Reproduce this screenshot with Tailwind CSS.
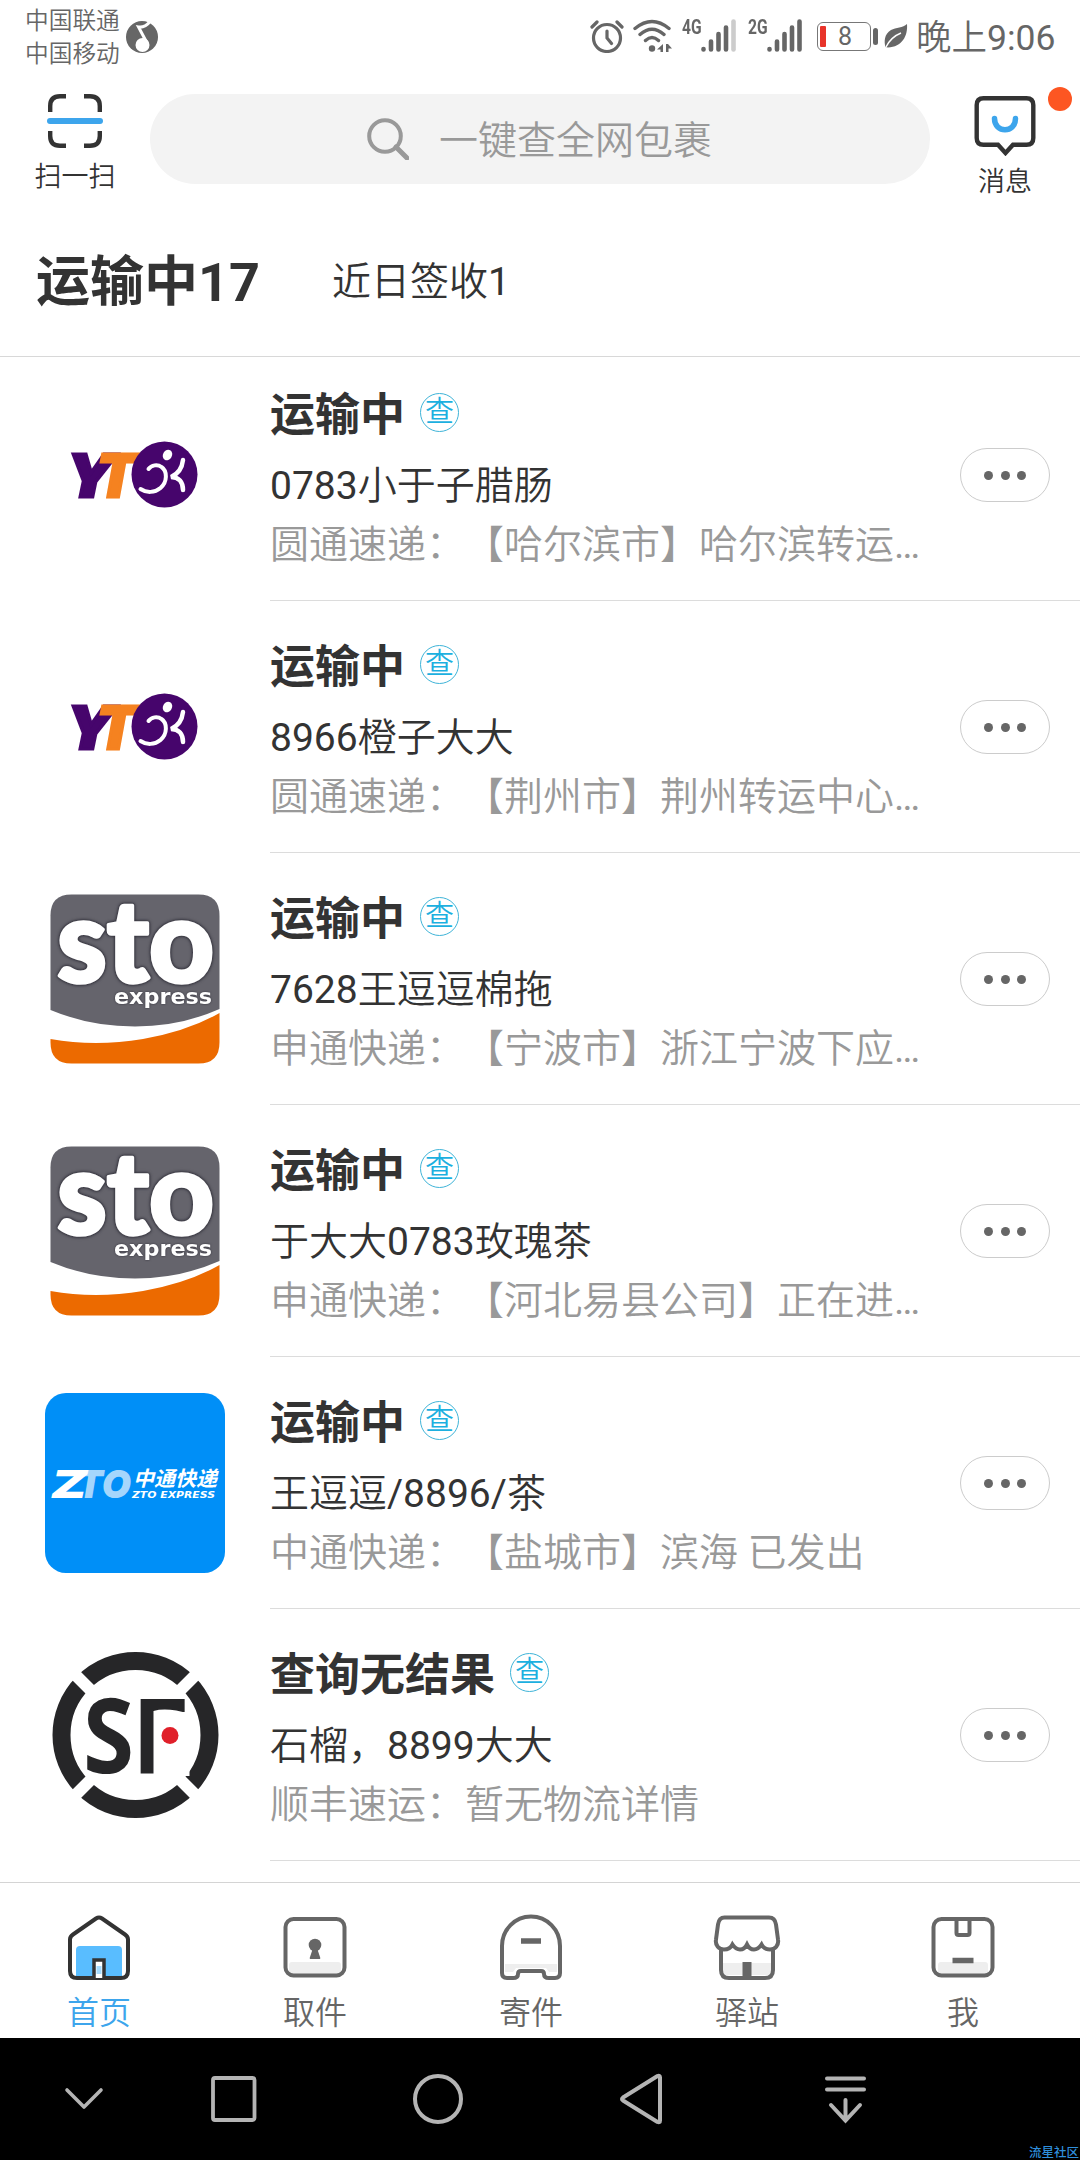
<!DOCTYPE html>
<html lang="zh-CN">
<head>
<meta charset="utf-8">
<title>运输中</title>
<script src="https://cdn.jsdelivr.net/npm/@tailwindcss/browser@4"></script>
</head>
<body class="bg-white">
<svg class="hidden">
  <symbol id="yto" viewBox="0 0 180 180">
    <text x="23" y="112" font-family="Roboto" font-weight="900" font-style="italic" font-size="61" fill="#46056c" stroke="#46056c" stroke-width="3" textLength="44" lengthAdjust="spacingAndGlyphs">Y</text>
    <text x="52" y="112" font-family="Roboto" font-weight="900" font-style="italic" font-size="61" fill="#f58220" stroke="#f58220" stroke-width="3" textLength="39" lengthAdjust="spacingAndGlyphs">T</text>
    <circle cx="119.500" cy="89.500" r="33" fill="#46056c"/>
    <ellipse cx="122.500" cy="70" rx="4.500" ry="5.500" fill="#fff" transform="rotate(30 122.500 70)"/>
    <path d="M103.500 84c3-4 9-5 13-2 6 4 6 15-1 21-6 5-14 5-20 1" fill="none" stroke="#fff" stroke-width="4" stroke-linecap="round"/>
    <path d="M138 75c-1 9-5 14-12 17 8 0 12 5 12 13" fill="none" stroke="#fff" stroke-width="4.500" stroke-linecap="round"/>
  </symbol>
  <symbol id="sto" viewBox="0 0 180 180">
    <path d="M26.500 5.500h127q21 0 21 21V120Q135 137.500 90 137.500Q45 137.500 5.500 121V26.500q0-21 21-21z" fill="#65646c"/>
    <path d="M5.500 150Q50 158 98 150Q143 142 174.500 124V153.500q0 21-21 21h-127q-21 0-21-21z" fill="#ec6a00"/>
    <text class="[filter:drop-shadow(0_0_1.500px_#33323c)_drop-shadow(0_0_1px_#33323c)]" x="12" y="93" font-family="Lato" font-weight="900" font-size="115" fill="#fff" stroke="#fff" stroke-width="3.500" stroke-linejoin="round" textLength="157" lengthAdjust="spacingAndGlyphs">sto</text>
    <text class="[filter:drop-shadow(0_0_1px_#33323c)]" x="69" y="115" font-family="DejaVu Sans" font-weight="700" font-size="21" fill="#fff" textLength="98" lengthAdjust="spacingAndGlyphs">express</text>
  </symbol>
  <symbol id="zto" viewBox="0 0 180 180">
    <rect width="180" height="180" rx="21" fill="#008ff7"/>
    <text x="32" y="104.500" font-family="Inter" font-weight="900" font-style="italic" font-size="39" fill="#a5d6fc" textLength="54" lengthAdjust="spacingAndGlyphs">TO</text>
    <text x="6" y="104.500" font-family="Inter" font-weight="900" font-style="italic" font-size="39" fill="#fff" textLength="36" lengthAdjust="spacingAndGlyphs">Z</text>
    <text x="88" y="92.500" font-family="Noto Sans CJK SC, sans-serif" font-weight="700" font-style="italic" font-size="20.500" fill="#fff" textLength="84" lengthAdjust="spacingAndGlyphs">中通快递</text>
    <text x="87" y="104.500" font-family="DejaVu Sans" font-weight="700" font-style="italic" font-size="9.500" fill="#fff" textLength="83" lengthAdjust="spacingAndGlyphs">ZTO EXPRESS</text>
  </symbol>
  <symbol id="sf" viewBox="0 0 180 180">
    <circle cx="90.500" cy="90" r="74" fill="none" stroke="#262628" stroke-width="18"/>
    <path d="M25 24.500L156 155.500M156 24.500L25 155.500" stroke="#fff" stroke-width="12"/>
    <circle cx="90.500" cy="90" r="62" fill="#fff"/>
    <text x="38" y="128" font-family="Open Sans" font-weight="700" font-size="104" fill="#262628" textLength="51" lengthAdjust="spacingAndGlyphs">S</text>
    <text x="86" y="128" font-family="Open Sans" font-weight="700" font-size="104" fill="#262628" textLength="59" lengthAdjust="spacingAndGlyphs">F</text>
    <path d="M108.500 66q14-4 36 3v62h-36z" fill="#fff"/>
    <circle cx="125" cy="90.500" r="8.500" fill="#e0202a"/>
  </symbol>
</svg>

<div class="relative flex h-[2160px] w-[1080px] flex-col overflow-hidden bg-white font-['Roboto','Noto_Sans_CJK_SC',sans-serif] font-[350] text-[#333] [text-spacing-trim:space-all]">
  <!-- status bar -->
  <header class="flex h-20 shrink-0 items-start text-[#666]">
    <div class="ml-[25px] mt-[5px] w-[95px] text-[23.7px] leading-[33px] whitespace-nowrap"><div>中国联通</div><div>中国移动</div></div>
    <svg class="ml-1.5 mt-[21px] size-8" viewBox="0 0 32 32"><circle cx="16" cy="16" r="16" fill="#666"/><circle cx="16.500" cy="24" r="7" fill="#fff"/><path d="M21 22L12.500 6Q19 7 24.500 0" fill="none" stroke="#fff" stroke-width="3"/></svg>
    <svg class="ml-[432px] mt-[19px] h-[34px] w-[34px]" viewBox="0 0 34 34" fill="none" stroke="#666" stroke-width="3.200" stroke-linecap="round"><circle cx="17" cy="19" r="13.500"/><path d="M17 12v7l4.500 5.500M2 8l5-5M32 8l-5-5"/></svg>
    <svg class="ml-[9px] mt-[19px] h-[34px] w-[40px]" viewBox="0 0 40 34" fill="none" stroke="#666" stroke-width="3.400" stroke-linecap="round"><path d="M2 9.500Q19 -4.500 36 9.500M7 15.500Q19 5 31 15.500M12.500 21.500Q19 15.500 25.500 21.500"/><circle cx="19" cy="29.500" r="3.200" fill="#666" stroke="none"/><path d="M30 25v8h-2.500v-2.500h-3.500zM33 25h2l4 4.500h-3.500v3.500H33z" fill="#666" stroke="none"/></svg>
    <span class="ml-[9px] mt-[17px] w-[19px] origin-left scale-x-[.78] text-[20px] leading-5 font-bold">4G</span>
    <svg class="mt-[19px] h-[34px] w-[35px]" viewBox="0 0 35 34" stroke="#666" stroke-width="4.600" stroke-linecap="round"><path d="M2.500 30.500v-.5M10 30.500v-8M17.500 30.500v-15.500M25 30.500v-22"/><path d="M32.500 30.500V2.500" stroke="#ccc"/></svg>
    <span class="ml-3 mt-[17px] w-[19px] origin-left scale-x-[.78] text-[20px] leading-5 font-bold">2G</span>
    <svg class="mt-[19px] h-[34px] w-[35px]" viewBox="0 0 35 34" stroke="#666" stroke-width="4.600" stroke-linecap="round"><path d="M2.500 30.500v-.5M10 30.500v-8M17.500 30.500v-15.500M25 30.500v-22M32.500 30.500V2.500"/></svg>
    <div class="ml-[15px] mt-[22px] flex h-[29px] w-[54px] items-center rounded-md border-[1.5px] border-[#777] pl-[2px]"><i class="h-[21px] w-[6px] rounded-[1px] bg-[#e8342a]"></i><span class="ml-3 text-[25px] leading-none font-normal">8</span></div>
    <i class="ml-[2px] mt-[28px] h-[17px] w-[5px] rounded-full bg-[#666]"></i>
    <svg class="ml-1.5 mt-[24px] h-6 w-6" viewBox="0 0 24 24"><path d="M23 0C24 12 18 23 4 23.500L1.500 23C0 18 0 10 7 6C12 3.500 19 4 23 0z" fill="#666"/><path d="M2 23Q7 13 17 9" stroke="#fff" stroke-width="1.400" fill="none"/></svg>
    <span class="ml-[8px] mt-[17px] text-[35.5px] leading-[42px] whitespace-nowrap">晚上<span class="font-normal">9:06</span></span>
  </header>

  <!-- scan, search and messages -->
  <div class="flex h-[130px] shrink-0 items-start">
    <div class="ml-[35px] mt-[14px] flex w-20 flex-col items-center">
      <svg class="h-[54px] w-[58px]" viewBox="0 0 58 54" fill="none" stroke="#333" stroke-width="4.400"><path d="M4.200 18v-6q0-9.800 9.800-9.800h6M38 2.200h6q9.800 0 9.800 9.800v6M4.200 37v5q0 9.800 9.800 9.800h6M38 51.800h6q9.800 0 9.800-9.800v-5"/><path d="M4 27h50" stroke="#3da5ec" stroke-width="6" stroke-linecap="round"/></svg>
      <span class="mt-[11px] text-[27px] leading-9 whitespace-nowrap">扫一扫</span>
    </div>
    <div class="ml-[35px] mt-[14px] flex h-[90px] w-[780px] items-center rounded-full bg-[#f3f3f3] pl-[217px]">
      <svg class="h-[42px] w-[42px]" viewBox="0 0 42 42" fill="none" stroke="#999" stroke-width="4"><circle cx="18" cy="18" r="15.800"/><path d="M29 29l11 11" stroke-width="5" stroke-linecap="round"/></svg>
      <span class="ml-[30px] pt-[4px] text-[39px] leading-none text-[#999]">一键查全网包裹</span>
    </div>
    <div class="relative ml-[35px] mt-4 flex w-20 flex-col items-center">
      <svg class="h-[60px] w-[62px]" viewBox="0 0 62 60" fill="none" stroke="#333" stroke-width="4.400"><path d="M9.500 2.200h43q6.800 0 6.800 6.800v33q0 6.800-6.800 6.800H39L31.500 57 24 48.800H9.500q-6.800 0-6.800-6.800V9q0-6.800 6.800-6.800z"/><path d="M20.500 22.500c0 15 21 15 21 0" stroke="#3da5ec" stroke-width="5.500" stroke-linecap="round"/></svg>
      <span class="mt-[8px] text-[27px] leading-9 whitespace-nowrap">消息</span>
      <i class="absolute -top-[9px] left-[83px] size-6 rounded-full bg-[#fd5622]"></i>
    </div>
  </div>

  <!-- tabs -->
  <div class="flex h-[147px] shrink-0 items-center border-b border-[#d8d8d8] pl-9">
    <b class="w-[223px] pb-px text-[54px] leading-none font-bold whitespace-nowrap">运输中17</b>
    <span class="ml-[73px] pb-[2px] text-[39px] leading-none">近日签收<span class="font-normal">1</span></span>
  </div>

  <!-- parcels, scrolled a little -->
  <main class="h-[1525px] shrink-0 overflow-hidden"><div id="list" class="-mt-2"></div></main>

  <!-- bottom tabs -->
  <nav class="h-[156px] shrink-0 border-t border-[#d4d4d4]">
    <div class="-ml-[9px] grid w-[1080px] grid-cols-5 pt-[31px] text-[32px] leading-[42px] text-[#666]">
      <div class="flex flex-col items-center text-[#3da5ec]">
        <svg class="mb-[10px] h-[68px] w-[68px]" viewBox="0 0 68 68" fill="none" stroke="#333" stroke-width="4"><path d="M11 64V36q0-4 4-4h38q4 0 4 4v28z" fill="#59bdff" stroke="none"/><path d="M31 4.500q3-2 6 0L60 20.500q3 2 3 5V57q0 7-7 7H12q-7 0-7-7V25.500q0-3 3-5z"/><path d="M29 64V46h10v18" fill="#fff" stroke-width="3.500"/><path d="M31.500 52h5v8h-5z" fill="#a7dcff" stroke="none"/></svg>首页
      </div>
      <div class="flex flex-col items-center">
        <svg class="mb-[10px] h-[68px] w-[68px]" viewBox="0 0 68 68"><path d="M8 51q0-3 3-3h46q3 0 3 3v7q0 3-3 3H11q-3 0-3-3z" fill="#eee"/><rect x="4.500" y="5" width="59" height="56.500" rx="8" fill="none" stroke="#666" stroke-width="4"/><circle cx="34" cy="31" r="6.300" fill="#666"/><path d="M32 34h4l3 9q1 2-1 2h-8q-2 0-1-2z" fill="#666"/></svg>取件
      </div>
      <div class="flex flex-col items-center">
        <svg class="mb-[10px] h-[68px] w-[68px]" viewBox="0 0 68 68"><path d="M8 50h52v8h-8l-3-4H19l-3 4H8z" fill="#eee"/><path d="M5 32a29 29.500 0 0 1 58 0V59q0 5-5 5h-6q-5 0-5-4 0-3-3-3H24q-3 0-3 3 0 4-5 4h-6q-5 0-5-5z" fill="none" stroke="#666" stroke-width="4"/><path d="M24 27h20" stroke="#666" stroke-width="5.500"/></svg>寄件
      </div>
      <div class="flex flex-col items-center">
        <svg class="mb-[10px] h-[68px] w-[68px]" viewBox="0 0 68 68" fill="none" stroke="#666" stroke-width="4"><path d="M10 49h48v12H10z" fill="#eee" stroke="none"/><path d="M8 34v22q0 8 8 8h36q8 0 8-8V34"/><path d="M29.500 48h9v16h-9z" fill="#666" stroke="none"/><path d="M12 3.500h44q6 0 7 7l2 15c1 6-3 10-8 10-4 0-7-2-8.500-5-2 3-5 5-7.500 5s-5.500-2-7-5c-1.500 3-4.500 5-7 5s-5.500-2-7.500-5c-1.500 3-4.500 5-8.500 5-5 0-9-4-8-10l2-15q1-7 6.500-7z" fill="#fff"/></svg>驿站
      </div>
      <div class="flex flex-col items-center">
        <svg class="mb-[10px] h-[68px] w-[68px]" viewBox="0 0 68 68" fill="none" stroke="#666" stroke-width="4"><path d="M9 51q0-3 3-3h44q3 0 3 3v7q0 3-3 3H12q-3 0-3-3z" fill="#eee" stroke="none"/><rect x="4.500" y="5" width="59" height="56.500" rx="8"/><path d="M27.500 6v13q0 2 2 2h9q2 0 2-2V6"/><path d="M23.500 46.500h21" stroke-width="5.500"/></svg>我
      </div>
    </div>
  </nav>

  <!-- system keys -->
  <footer class="relative flex h-[122px] shrink-0 items-start overflow-hidden bg-black pt-[34px]">
    <svg class="ml-[63px] h-[54px] w-[42px]" viewBox="0 0 42 54" fill="none" stroke="#b4b4b4" stroke-width="3.600" stroke-linecap="round"><path d="M4 18l17 17 17-17" stroke-linejoin="round"/></svg>
    <svg class="ml-[104px] h-[54px] w-[50px]" viewBox="0 0 50 54" fill="none" stroke="#b4b4b4" stroke-width="3.800"><rect x="4" y="6" width="41.500" height="42" rx="2"/></svg>
    <svg class="ml-[152px] h-[54px] w-[54px]" viewBox="0 0 54 54" fill="none" stroke="#b4b4b4" stroke-width="4"><circle cx="27" cy="27" r="23"/></svg>
    <svg class="ml-[152px] h-[54px] w-[50px]" viewBox="0 0 50 54" fill="none" stroke="#b4b4b4" stroke-width="4" stroke-linejoin="round"><path d="M6 25.500q-2 1.500 0 3L40.500 50q2.500 1 2.500-1.500V5.500Q43 3 40.500 4z"/></svg>
    <svg class="ml-[156px] h-[54px] w-[46px]" viewBox="0 0 46 54" fill="none" stroke="#b4b4b4" stroke-width="4" stroke-linecap="round"><path d="M4 6.500h37M4 17.500h37M22.500 28v20M8 33l14.500 15.500L37 33"/></svg>
    <span class="absolute top-[107px] left-[1029px] text-[12.5px] leading-[15px] font-medium whitespace-nowrap text-[#2f8fdc]">流星社区</span>
  </footer>
</div>

<script>
  const parcels = [
    ['yto', '运输中', '0783小于子腊肠', '圆通速递：【哈尔滨市】哈尔滨转运…'],
    ['yto', '运输中', '8966橙子大大', '圆通速递：【荆州市】荆州转运中心…'],
    ['sto', '运输中', '7628王逗逗棉拖', '申通快递：【宁波市】浙江宁波下应…'],
    ['sto', '运输中', '于大大0783玫瑰茶', '申通快递：【河北易县公司】正在进…'],
    ['zto', '运输中', '王逗逗/8896/茶', '中通快递：【盐城市】滨海 已发出'],
    ['sf', '查询无结果', '石榴，8899大大', '顺丰速运：暂无物流详情'],
  ];
  // Latin runs are set one weight heavier than the Chinese text
  const latin = s => s.replace(/[\d\/]+|…/g, m => `<span class="font-normal">${m}</span>`);
  document.getElementById('list').innerHTML = parcels.map(([logo, state, name, detail]) => `
    <article class="flex h-[252px]">
      <div class="flex w-[270px] items-center pl-[45px]"><svg class="size-[180px]"><use href="#${logo}"/></svg></div>
      <div class="flex flex-1 border-b border-[#dcdcdc]">
        <div class="w-[690px] pt-[37px]">
          <div class="flex h-[60px] items-center">
            <b class="text-[45px] leading-[60px] font-bold">${state}</b>
            <span class="mb-[7px] ml-[15px] flex size-[39px] items-center justify-center rounded-full border border-[#3fb4d8] text-[29px] leading-none text-[#1cb0e0]">查</span>
          </div>
          <div class="mt-[12px] text-[39px] leading-[56px]">${latin(name)}</div>
          <div class="mt-[3px] text-[39px] leading-[56px] whitespace-nowrap text-[#999]">${latin(detail)}</div>
        </div>
        <div class="mt-[99px] flex h-[54px] w-[90px] items-center justify-center gap-[7.5px] rounded-full border-[1.5px] border-[#ccc]">
          <i class="size-[9px] rounded-full bg-[#666]"></i><i class="size-[9px] rounded-full bg-[#666]"></i><i class="size-[9px] rounded-full bg-[#666]"></i>
        </div>
      </div>
    </article>`).join('');
</script>
</body>
</html>
